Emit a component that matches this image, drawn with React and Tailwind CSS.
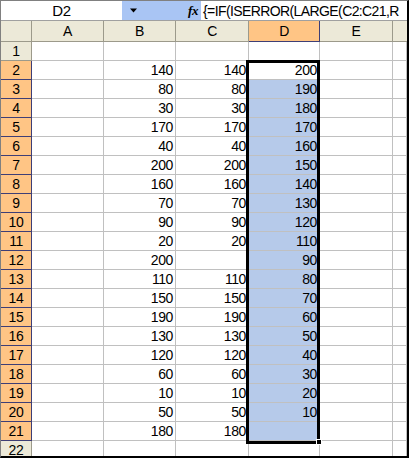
import React from "react";

const colB = [140, 80, 30, 170, 40, 200, 160, 70, 90, 20, 200, 110, 150, 190, 130, 120, 60, 10, 50, 180];
const colC = [140, 80, 30, 170, 40, 200, 160, 70, 90, 20, "", 110, 150, 190, 130, 120, 60, 10, 50, 180];
const colD = [200, 190, 180, 170, 160, 150, 140, 130, 120, 110, 90, 80, 70, 60, 50, 40, 30, 20, 10, ""];

const gridCols = "grid grid-cols-[31px_72px_72px_73px_71px_73px_1fr]";

function Row({ n, b, c, d }) {
  const sel = n >= 2 && n <= 21;
  const num = "h-[19px] border-r border-b border-[#c0c0c0] text-right pr-[2px] leading-[18px]";
  return (
    <div className={gridCols}>
      <div
        className={
          sel
            ? "h-[19px] bg-[#ffc585] border-r border-b border-[#3e3e76] text-center leading-[18px]"
            : "h-[19px] bg-[#ece9d8] border-r border-b border-[#9c9a8b] text-center leading-[18px]"
        }
      >
        {n}
      </div>
      <div className={num}></div>
      <div className={num}>{b}</div>
      <div className={num}>{c}</div>
      <div className={sel && n > 2 ? num + " bg-[#b6caea]" : num}>{d}</div>
      <div className={num}></div>
      <div className={num}></div>
    </div>
  );
}

export default function App() {
  const rows = [];
  rows.push(<Row key={1} n={1} />);
  for (let i = 0; i < 20; i++) {
    rows.push(<Row key={i + 2} n={i + 2} b={colB[i]} c={colC[i]} d={colD[i]} />);
  }

  return (
    <div
      className="relative w-[409px] h-[458px] overflow-hidden bg-white border-t border-l border-[#808080] border-r-2 border-b-2 border-r-black border-b-black text-[14px] tracking-[-0.4px] text-black"
      style={{ fontFamily: '"Liberation Sans", Arial, sans-serif' }}
    >
      {/* name box + formula bar */}
      <div className="flex h-[20px] border-b border-[#a0a0a0]">
        <div className="w-[121px] bg-white text-center leading-[20px] text-[15px]">D2</div>
        <div className="flex items-center w-[79px] bg-[#a9c5f4]">
          <svg width="9" height="5" viewBox="0 0 9 5" className="ml-[7px]">
            <path d="M1 0.5h7L4.5 4.5z" fill="#000" />
          </svg>
          <span
            className="ml-auto mr-[3px] italic font-bold text-[13px] leading-[20px]"
            style={{ fontFamily: '"Liberation Serif", serif' }}
          >
            fx
          </span>
        </div>
        <div className="flex-1 bg-white pl-[2px] leading-[20px] text-[14px] tracking-[-0.6px] whitespace-nowrap overflow-hidden">
          {"{=IF(ISERROR(LARGE(C2:C21,R"}
        </div>
      </div>

      {/* column headers */}
      <div className={gridCols + " h-[21px] bg-[#ece9d8] leading-[20px] text-center"}>
        <div className="border-r border-b border-[#9c9a8b]"></div>
        <div className="border-r border-b border-[#9c9a8b]">A</div>
        <div className="border-r border-b border-[#9c9a8b]">B</div>
        <div className="border-r border-b border-[#9c9a8b]">C</div>
        <div className="bg-[#ffc585] border-r border-b border-[#3e3e76]">D</div>
        <div className="border-r border-b border-[#9c9a8b]">E</div>
        <div className="border-b border-[#9c9a8b]"></div>
      </div>

      {rows}
      <Row n={22} />

      {/* selection outline */}
      <div className="absolute left-[245px] top-[59px] w-[74px] h-[384px] border-[3px] border-black pointer-events-none"></div>
      <div className="absolute left-[315px] top-[438px] w-[6px] h-[6px] bg-black border border-white pointer-events-none"></div>
    </div>
  );
}
